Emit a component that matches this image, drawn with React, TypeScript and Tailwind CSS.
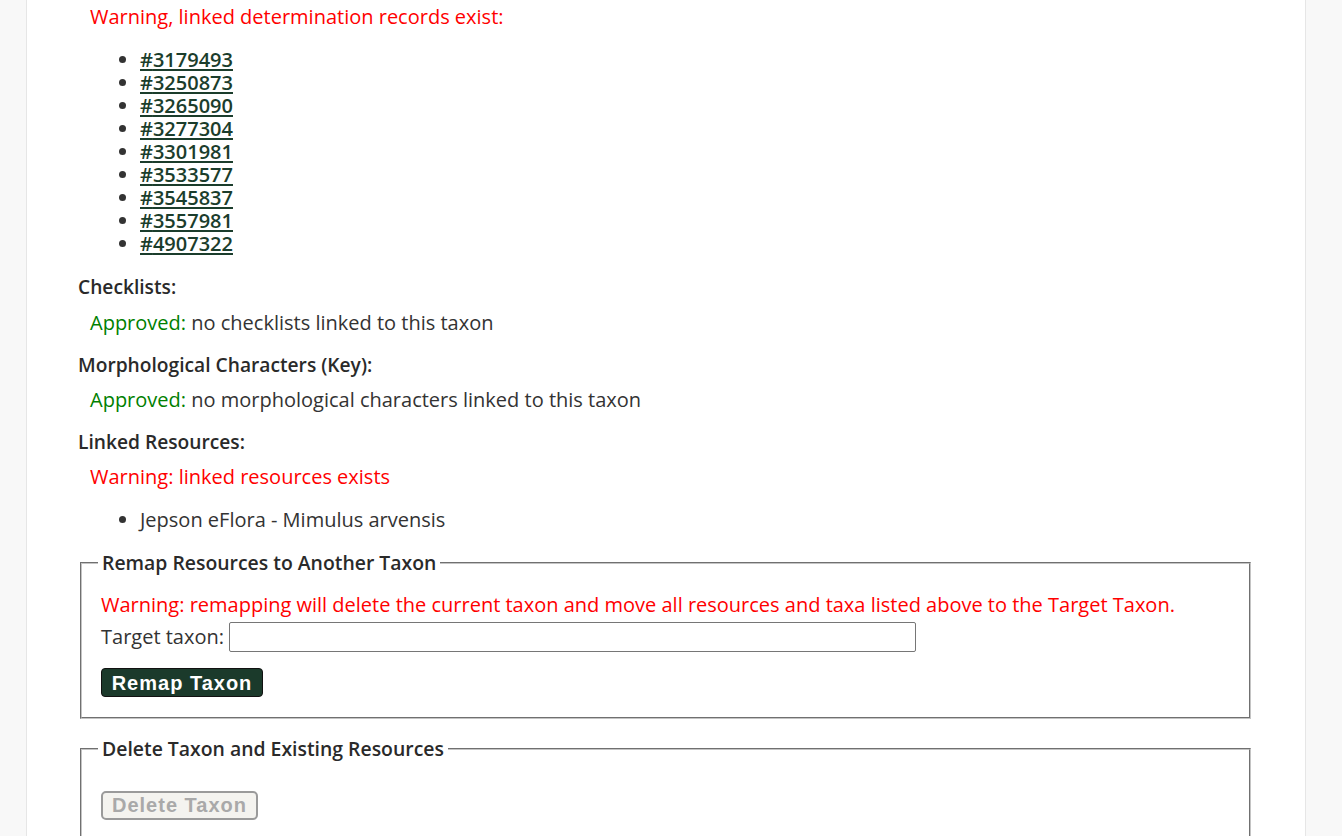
import React from "react";

const RECORDS = [
  "3179493",
  "3250873",
  "3265090",
  "3277304",
  "3301981",
  "3533577",
  "3545837",
  "3557981",
  "4907322",
];

const font = { fontFamily: "'Open Sans', 'Liberation Sans', sans-serif" };
const btnFont = { fontFamily: "'Liberation Sans', Arial, sans-serif" };

export default function App() {
  return (
    <div className="min-h-[836px] bg-[#f8f8f8] text-[20px] text-[#333]" style={font}>
      <div className="ml-[26px] w-[1280px] min-h-[836px] bg-white border-x border-[#e6e6e6] pl-[51px] pr-[54px] pt-[4px] overflow-hidden">
        {/* determinations */}
        <div className="pl-[12px] leading-[26px] text-[#ff0000]">
          Warning, linked determination records exist:
        </div>
        <ul className="mt-[18px] list-disc pl-[62px] text-[20px] leading-[23px] marker:text-[#333]">
          {RECORDS.map((id) => (
            <li key={id}>
              <a href="#" className="font-semibold text-[#1b3d2c] underline decoration-[2px] underline-offset-[2px]">
                #{id}
              </a>
            </li>
          ))}
        </ul>

        {/* checklists */}
        <h4 className="mt-[19px] text-[19.2px] font-semibold text-[#2a2a2a] leading-[26px]">Checklists:</h4>
        <div className="mt-[10px] pl-[12px] leading-[26px]">
          <span className="text-[#008000]">Approved:</span> no checklists linked to this taxon
        </div>

        <h4 className="mt-[16px] text-[19.2px] font-semibold text-[#2a2a2a] leading-[26px]">Morphological Characters (Key):</h4>
        <div className="mt-[9px] pl-[12px] leading-[26px]">
          <span className="text-[#008000]">Approved:</span> no morphological characters linked to this taxon
        </div>

        <h4 className="mt-[16px] text-[19.2px] font-semibold text-[#2a2a2a] leading-[26px]">Linked Resources:</h4>
        <div className="mt-[9px] pl-[12px] leading-[26px] text-[#ff0000]">
          Warning: linked resources exists
        </div>
        <ul className="mt-[17px] list-disc pl-[62px] leading-[26px]">
          <li>Jepson eFlora - Mimulus arvensis</li>
        </ul>

        {/* remap */}
        <fieldset className="mt-[17px] ml-[2px] border-2 [border-style:groove] border-[#c4c4c4] pl-[19px] pb-[19px]">
          <legend className="-ml-[3px] px-[4px] text-[19.4px] font-semibold text-[#2a2a2a] leading-[26px]">
            Remap Resources to Another Taxon
          </legend>
          <div className="mt-[16px] leading-[26px] text-[#ff0000]">
            Warning: remapping will delete the current taxon and move all resources and taxa listed above to the Target Taxon.
          </div>
          <div className="mt-[4px] flex items-center gap-[5px]">
            <label className="leading-[26px]">Target taxon:</label>
            <input
              type="text"
              className="h-[30px] w-[687px] border border-[#767676] rounded-[2px] bg-white px-2 outline-none"
            />
          </div>
          <button
            type="button"
            className="mt-[16px] h-[29px] w-[162px] rounded-[4px] border border-[#111] bg-[#1b3a2b] text-white text-[20px] font-bold tracking-[1px] leading-none"
            style={btnFont}
          >
            Remap Taxon
          </button>
        </fieldset>

        {/* delete */}
        <fieldset className="mt-[17px] ml-[2px] border-2 [border-style:groove] border-[#c4c4c4] pl-[19px] pb-[19px]">
          <legend className="-ml-[3px] px-[4px] text-[19.4px] font-semibold text-[#2a2a2a] leading-[26px]">
            Delete Taxon and Existing Resources
          </legend>
          <button
            type="button"
            disabled
            className="mt-[29px] h-[29px] w-[157px] rounded-[5px] border-2 border-[#9a9a9a] bg-[#f4f3ef] text-[#a9a9a9] text-[20px] font-bold tracking-[1px] leading-none"
            style={btnFont}
          >
            Delete Taxon
          </button>
        </fieldset>
      </div>
    </div>
  );
}
